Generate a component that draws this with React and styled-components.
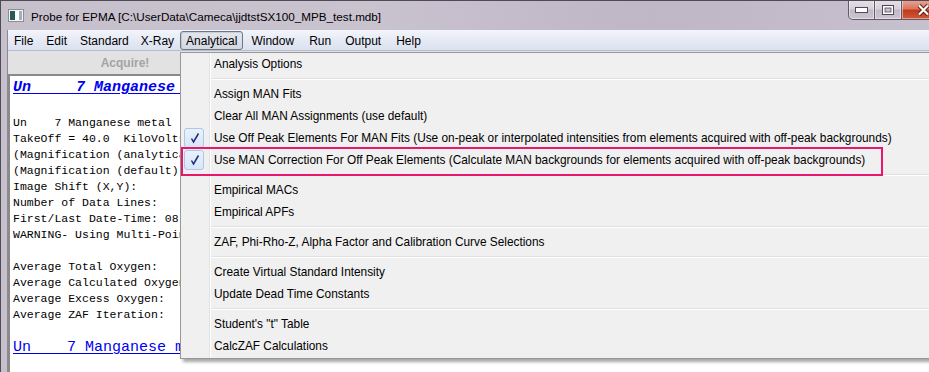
import React from "react";
import styled, { createGlobalStyle } from "styled-components";

const GlobalStyle = createGlobalStyle`
  html, body {
    margin: 0;
    padding: 0;
  }
  body {
    width: 929px;
    height: 372px;
    overflow: hidden;
    font-family: "Liberation Sans", Arial, sans-serif;
  }
`;

const Window = styled.div`
  position: relative;
  width: 929px;
  height: 372px;
  box-sizing: border-box;
  overflow: hidden;
  display: flex;
  flex-direction: column;
  background: linear-gradient(to right, #c6bfcc, #c9c2cf 40%, #bfb6c6 70%, #c7c0cd);
  border-top: 1px solid #4f4b55;
  border-left: 1px solid #4f4b55;
`;

const TitleBar = styled.div`
  height: 29px;
  display: flex;
  align-items: flex-start;
  flex-shrink: 0;
`;

const AppIcon = styled.svg`
  margin: 8px 0 0 7px;
  flex-shrink: 0;
`;

const Title = styled.div`
  margin: 9px 0 0 7px;
  font-size: 11.7px;
  color: #000;
  white-space: nowrap;
`;

const Controls = styled.div`
  margin-left: auto;
  margin-right: -16px;
  margin-top: -1px;
  display: flex;
`;

const CtrlButton = styled.div`
  width: ${(p) => (p.close ? 43 : 27)}px;
  height: 20px;
  box-sizing: border-box;
  display: flex;
  align-items: center;
  justify-content: center;
  border: 1px solid #5f5a66;
  border-left-width: ${(p) => (p.first ? 1 : 0)}px;
  border-top: none;
  border-bottom-left-radius: ${(p) => (p.first ? 5 : 0)}px;
  background: ${(p) =>
    p.close
      ? "linear-gradient(to bottom, #e9a899 0%, #d9775f 45%, #c23a1c 55%, #d0583a 100%)"
      : "linear-gradient(to bottom, #e6e1e8 0%, #d6d0da 45%, #c2bac7 55%, #ccc5d0 100%)"};
  box-shadow: inset 0 0 0 1px rgba(255, 255, 255, 0.45);
`;

const Frame = styled.div`
  flex: 1;
  display: flex;
  padding-left: 6px;
  min-height: 0;
`;

const Client = styled.div`
  flex: 1;
  display: flex;
  flex-direction: column;
  border-left: 1px solid #8e8895;
  background: #fff;
  min-width: 0;
`;

const MenuBar = styled.div`
  height: 20px;
  flex-shrink: 0;
  display: flex;
  align-items: center;
  background: linear-gradient(to bottom, #f3f5fb, #e6eaf5 50%, #dbe1f0);
  border-bottom: 1px solid #b6bccc;
`;

const MenuTitle = styled.div`
  height: 19px;
  box-sizing: border-box;
  display: flex;
  align-items: center;
  padding: 0 ${(p) => p.pad}px;
  font-size: 12px;
  color: #000;
  border: 1px solid ${(p) => (p.open ? "#6d7788" : "transparent")};
  border-radius: 3px;
  background: ${(p) => (p.open ? "linear-gradient(to bottom, #e4e7ee, #d3d8e2)" : "transparent")};
  box-shadow: ${(p) => (p.open ? "inset 1px 1px 1px rgba(0,0,0,0.12)" : "none")};
  margin-top: 1px;
`;

const Toolbar = styled.div`
  height: 23px;
  flex-shrink: 0;
  background: #e2e2e2;
  display: flex;
`;

const AcquireButton = styled.div`
  width: 234px;
  display: flex;
  align-items: center;
  justify-content: center;
  font-weight: bold;
  font-size: 12px;
  color: #a4a4a4;
`;

const TextPanel = styled.div`
  flex: 1;
  background: #fff;
  border-top: 2px solid #8a8a8a;
  border-left: 2px solid #8a8a8a;
  padding: 1px 0 0 3px;
  font-family: "Liberation Mono", "Courier New", monospace;
  font-size: 11.5px;
  color: #000;
  overflow: hidden;
`;

const Line = styled.div`
  height: 16px;
  line-height: 16px;
  white-space: pre;
`;

const Heading = styled.div`
  height: ${(p) => (p.bold ? 22 : 18)}px;
  line-height: ${(p) => (p.bold ? 22 : 18)}px;
  white-space: pre;
  font-size: 15px;
  font-weight: ${(p) => (p.bold ? "bold" : "normal")};
  font-style: ${(p) => (p.bold ? "italic" : "normal")};
  color: #0000f0;
  text-decoration: underline;
  text-underline-offset: 2px;
`;

const Dropdown = styled.div`
  position: absolute;
  left: 179px;
  top: 51px;
  width: 770px;
  height: 307px;
  box-sizing: border-box;
  padding: 0 1px 1px;
  border: 1px solid #979797;
  background: linear-gradient(
    to right,
    #f0f0f0 28px,
    #e2e3e3 28px,
    #e2e3e3 29px,
    #ffffff 29px,
    #ffffff 30px,
    #f0f0f0 30px
  );
  box-shadow: 3px 3px 3px rgba(0, 0, 0, 0.35);
  z-index: 5;
`;

const DropItem = styled.div`
  position: relative;
  height: 22px;
  display: flex;
  align-items: center;
  padding-left: 32px;
  font-size: 11.85px;
  color: #000;
  white-space: nowrap;
`;

const CheckBox = styled.div`
  position: absolute;
  left: 2px;
  top: 1px;
  width: 20px;
  height: 20px;
  box-sizing: border-box;
  border: 1px solid #a9c8ec;
  border-radius: 3px;
  background: linear-gradient(to bottom, #eaf2fb, #d9e6f5);
  display: flex;
  align-items: center;
  justify-content: center;
`;

const Separator = styled.div`
  height: 8px;
  margin-left: 30px;
  display: flex;
  align-items: center;
  &::after {
    content: "";
    flex: 1;
    height: 1px;
    background: #e0e0e0;
    border-bottom: 1px solid #ffffff;
  }
`;

const Annotation = styled.div`
  position: absolute;
  left: 180px;
  top: 146px;
  width: 702px;
  height: 29px;
  box-sizing: border-box;
  border: 2px solid #e8176e;
  z-index: 6;
  pointer-events: none;
`;

const Check = () => (
  <svg width="18" height="18" viewBox="0 0 18 18">
    <path d="M6.5 9.5 L8.5 13 L13.5 4.5" fill="none" stroke="#1b2c86" strokeWidth="1.5" />
  </svg>
);

const menuTitles = [
  { label: "File", pad: 5 },
  { label: "Edit", pad: 6 },
  { label: "Standard", pad: 5 },
  { label: "X-Ray", pad: 5 },
  { label: "Analytical", pad: 5, open: true },
  { label: "Window", pad: 7 },
  { label: "Run", pad: 6 },
  { label: "Output", pad: 6 },
  { label: "Help", pad: 7 },
];

const menuItems = [
  { label: "Analysis Options" },
  { sep: true },
  { label: "Assign MAN Fits" },
  { label: "Clear All MAN Assignments (use default)" },
  {
    label:
      "Use Off Peak Elements For MAN Fits (Use on-peak or interpolated intensities from elements acquired with off-peak backgrounds)",
    checked: true,
  },
  {
    label:
      "Use MAN Correction For Off Peak Elements (Calculate MAN backgrounds for elements acquired with off-peak backgrounds)",
    checked: true,
  },
  { sep: true },
  { label: "Empirical MACs" },
  { label: "Empirical APFs" },
  { sep: true },
  { label: "ZAF, Phi-Rho-Z, Alpha Factor and Calibration Curve Selections" },
  { sep: true },
  { label: "Create Virtual Standard Intensity" },
  { label: "Update Dead Time Constants" },
  { sep: true },
  { label: "Student's \"t\" Table" },
  { label: "CalcZAF Calculations" },
];

const textLines = [
  "Un    7 Manganese metal",
  "TakeOff = 40.0  KiloVolts",
  "(Magnification (analytical)",
  "(Magnification (default)",
  "Image Shift (X,Y):",
  "Number of Data Lines:",
  "First/Last Date-Time: 08",
  "WARNING- Using Multi-Point",
  "",
  "Average Total Oxygen:",
  "Average Calculated Oxygen:",
  "Average Excess Oxygen:",
  "Average ZAF Iteration:",
  "",
];

const App = () => {
  return (
    <>
      <GlobalStyle />
      <Window>
        <TitleBar>
          <AppIcon width="16" height="13" viewBox="0 0 16 13">
            <rect x="0.5" y="0.5" width="15" height="12" fill="#f4f4f4" stroke="#8d8d8d" />
            <rect x="2" y="2" width="5" height="9" fill="#27595b" />
            <rect x="7" y="2" width="4" height="9" fill="#ffffff" />
            <rect x="11" y="2" width="3" height="9" fill="#9fb0c0" />
          </AppIcon>
          <Title>Probe for EPMA [C:\UserData\Cameca\jjdtstSX100_MPB_test.mdb]</Title>
          <Controls>
            <CtrlButton first>
              <svg width="13" height="6" viewBox="0 0 13 6">
                <rect x="0.5" y="0.5" width="12" height="5" fill="#fff" stroke="#4e4a55" />
              </svg>
            </CtrlButton>
            <CtrlButton>
              <svg width="12" height="10" viewBox="0 0 12 10">
                <rect x="0.5" y="0.5" width="11" height="9" fill="#fff" stroke="#4e4a55" />
                <rect x="3" y="3" width="6" height="4" fill="#c9c3cd" stroke="#4e4a55" strokeWidth="0.8" />
              </svg>
            </CtrlButton>
            <CtrlButton close>
              <svg width="13" height="12" viewBox="0 0 13 12">
                <path d="M2 1.5 L11 10.5 M11 1.5 L2 10.5" stroke="#5a1a10" strokeWidth="4" />
                <path d="M2 1.5 L11 10.5 M11 1.5 L2 10.5" stroke="#fff" strokeWidth="2.2" />
              </svg>
            </CtrlButton>
          </Controls>
        </TitleBar>
        <Frame>
          <Client>
            <MenuBar>
              {menuTitles.map((m) => (
                <MenuTitle key={m.label} pad={m.pad} open={m.open}>
                  {m.label}
                </MenuTitle>
              ))}
            </MenuBar>
            <Toolbar>
              <AcquireButton>Acquire!</AcquireButton>
            </Toolbar>
            <TextPanel>
              <Heading bold>{"Un     7 Manganese metal"}</Heading>
              <Line />
              {textLines.map((t, i) => (
                <Line key={i}>{t}</Line>
              ))}
              <Heading>{"Un    7 Manganese metal"}</Heading>
            </TextPanel>
          </Client>
        </Frame>
        <Dropdown>
          {menuItems.map((item, i) =>
            item.sep ? (
              <Separator key={i} />
            ) : (
              <DropItem key={i}>
                {item.checked && (
                  <CheckBox>
                    <Check />
                  </CheckBox>
                )}
                {item.label}
              </DropItem>
            )
          )}
        </Dropdown>
        <Annotation />
      </Window>
    </>
  );
};

export default App;
